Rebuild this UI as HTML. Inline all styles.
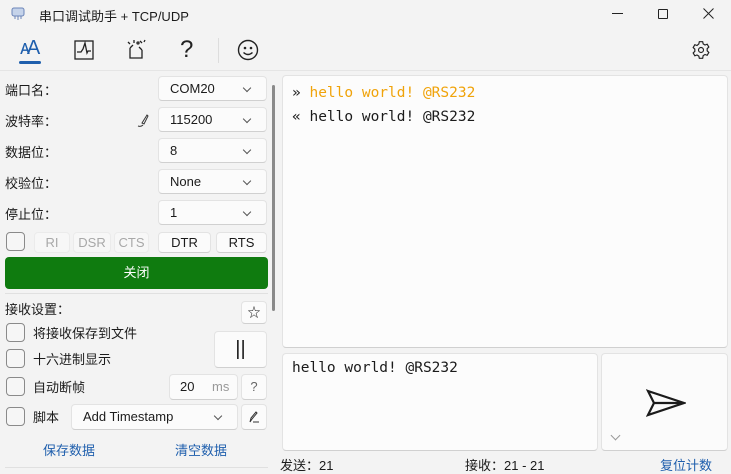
<!DOCTYPE html>
<html><head><meta charset="utf-8"><style>
*{box-sizing:border-box;margin:0;padding:0}
body{width:731px;height:472px;overflow:hidden;background:#f3f3f3;font-family:"Liberation Sans","Noto Sans CJK SC",sans-serif;font-size:13px;color:#1b1b1b;position:relative}
.a{position:absolute}
.box{position:absolute;background:#fbfbfb;border:1px solid #e3e3e3;border-bottom-color:#d0d0d0;border-radius:4px}
.sel{position:absolute;background:#fbfbfb;border:1px solid #e3e3e3;border-bottom-color:#d0d0d0;border-radius:4px;padding-left:11px;line-height:23px;font-size:13px}
.sel:after{content:"";position:absolute;right:16px;top:8px;width:5px;height:5px;border-right:1px solid #555;border-bottom:1px solid #555;transform:rotate(45deg)}
.cb{position:absolute;width:19px;height:19px;border:1px solid #8a8a8a;border-radius:4px;background:#f6f6f6}
.lbl{position:absolute;font-size:13px}
.btn{position:absolute;background:#fbfbfb;border:1px solid #e3e3e3;border-bottom-color:#d0d0d0;border-radius:4px;text-align:center;font-size:13px}
.dis{color:#a8a8a8;background:#f7f7f7;border-color:#ebebeb}
.mono{font-family:"DejaVu Sans Mono","Liberation Mono",monospace;font-size:14.5px}
</style></head><body>
<svg class="a" style="left:10px;top:6px" width="16" height="16" viewBox="0 0 16 16"><rect x="2" y="2" width="12" height="8" rx="2" fill="#c5d3ea" stroke="#6b84b8"/><path d="M5 10v3M8 10v4M11 10v3" stroke="#6b84b8"/></svg>
<div class="lbl" style="left:39px;top:6px;font-size:13px">串口调试助手 + TCP/UDP</div>
<div class="a" style="left:612px;top:13px;width:11px;border-top:1px solid #222"></div>
<div class="a" style="left:658px;top:9px;width:10px;height:10px;border:1px solid #222;border-radius:1px"></div>
<svg class="a" style="left:703px;top:8px" width="11" height="11"><path d="M0.5 0.5L10.5 10.5M10.5 0.5L0.5 10.5" stroke="#222"/></svg>
<div class="a" style="left:20px;top:37px;color:#1f5fad;font-size:20px;letter-spacing:-3px">ᴀA</div>
<div class="a" style="left:19px;top:61px;width:22px;height:3px;background:#1f5fad;border-radius:2px"></div>
<svg class="a" style="left:74px;top:40px" width="20" height="20" viewBox="0 0 20 20" fill="none" stroke="#222" stroke-width="1.3"><rect x="1" y="1" width="18" height="18"/><path d="M3 12h4l2-3 2-6 2 10 1-2h3"/></svg>
<svg class="a" style="left:126px;top:38px" width="22" height="22" viewBox="0 0 22 22" fill="none" stroke="#222" stroke-width="1.3"><path d="M4 10v10h12v-8M4 10l3-3M16 12l-3-3"/><path d="M2 4l2 2M8 2v3M14 3l2 2M18 4l1-2" /><circle cx="12" cy="5" r="1"/></svg>
<div class="a" style="left:180px;top:36px;font-size:24px;font-weight:300;color:#222">?</div>
<div class="a" style="left:218px;top:38px;height:25px;border-left:1px solid #ddd"></div>
<svg class="a" style="left:237px;top:39px" width="22" height="22" viewBox="0 0 22 22" fill="none" stroke="#222" stroke-width="1.4"><circle cx="11" cy="11" r="9.5"/><circle cx="8" cy="9" r=".6" fill="#222"/><circle cx="14" cy="9" r=".6" fill="#222"/><path d="M6.5 13.5q4.5 4 9 0"/></svg>
<svg class="a" style="left:691px;top:40px" width="20" height="20" viewBox="0 0 24 24" fill="none" stroke="#222" stroke-width="1.4"><path d="M10 2h4l.6 2.7 2.2 1.3 2.6-.9 2 3.4-2 1.9v2.6l2 1.9-2 3.4-2.6-.9-2.2 1.3L14 22h-4l-.6-2.7-2.2-1.3-2.6.9-2-3.4 2-1.9v-2.6l-2-1.9 2-3.4 2.6.9L9.4 4.7z"/><circle cx="12" cy="12" r="3"/></svg>
<div class="a" style="left:0;top:70px;width:731px;border-top:1px solid #e5e5e5"></div>
<div class="lbl" style="left:5px;top:80px">端口名：</div>
<div class="sel" style="left:158px;top:76px;width:109px;height:25px">COM20</div>
<div class="lbl" style="left:5px;top:111px">波特率：</div>
<svg class="a" style="left:136px;top:112px" width="14" height="16" viewBox="0 0 14 16" fill="none" stroke="#333"><path d="M2 14q3 1 5-1M6 11l5-8 1 1-4 8z"/></svg>
<div class="sel" style="left:158px;top:107px;width:109px;height:25px">115200</div>
<div class="lbl" style="left:5px;top:142px">数据位：</div>
<div class="sel" style="left:158px;top:138px;width:109px;height:25px">8</div>
<div class="lbl" style="left:5px;top:173px">校验位：</div>
<div class="sel" style="left:158px;top:169px;width:109px;height:25px">None</div>
<div class="lbl" style="left:5px;top:204px">停止位：</div>
<div class="sel" style="left:158px;top:200px;width:109px;height:25px">1</div>
<div class="a" style="left:272px;top:85px;width:3px;height:226px;background:#8a8a8a;border-radius:2px"></div>
<div class="cb" style="left:6px;top:232px"></div>
<div class="btn dis" style="left:34px;top:232px;width:36px;height:21px;line-height:19px">RI</div>
<div class="btn dis" style="left:73px;top:232px;width:38px;height:21px;line-height:19px">DSR</div>
<div class="btn dis" style="left:114px;top:232px;width:35px;height:21px;line-height:19px">CTS</div>
<div class="btn" style="left:158px;top:232px;width:53px;height:21px;line-height:19px">DTR</div>
<div class="btn" style="left:216px;top:232px;width:51px;height:21px;line-height:19px">RTS</div>
<div class="a" style="left:5px;top:257px;width:263px;height:32px;background:#0f7b0f;border-radius:4px;color:#fff;text-align:center;line-height:32px;font-size:13px">关闭</div>
<div class="a" style="left:5px;top:293px;width:263px;border-top:1px solid #e0e0e0"></div>
<div class="lbl" style="left:5px;top:299px">接收设置：</div>
<div class="btn" style="left:241px;top:301px;width:26px;height:23px;line-height:21px;font-size:13px">☆</div>
<div class="cb" style="left:6px;top:323px"></div><div class="lbl" style="left:33px;top:323px">将接收保存到文件</div>
<div class="cb" style="left:6px;top:349px"></div><div class="lbl" style="left:33px;top:349px">十六进制显示</div>
<div class="btn" style="left:214px;top:331px;width:53px;height:37px;line-height:34px;font-size:20px">||</div>
<div class="cb" style="left:6px;top:377px"></div><div class="lbl" style="left:33px;top:377px">自动断帧</div>
<div class="box" style="left:169px;top:374px;width:69px;height:26px"><span class="a" style="left:10px;top:4px">20</span><span class="a" style="left:42px;top:4px;color:#999">ms</span></div>
<div class="btn" style="left:241px;top:374px;width:26px;height:26px;line-height:24px;color:#666">?</div>
<div class="cb" style="left:6px;top:407px"></div><div class="lbl" style="left:33px;top:407px">脚本</div>
<div class="sel" style="left:71px;top:404px;width:167px;height:26px;line-height:24px">Add Timestamp</div>
<div class="btn" style="left:241px;top:404px;width:26px;height:26px"><svg style="margin-top:5px" width="14" height="14" viewBox="0 0 14 14" fill="none" stroke="#333"><path d="M3 12l1-4 5-6 1 1-5 6zM6 12h6"/></svg></div>
<div class="lbl" style="left:43px;top:440px;color:#1f5fad">保存数据</div>
<div class="lbl" style="left:175px;top:440px;color:#1f5fad">清空数据</div>
<div class="a" style="left:5px;top:467px;width:263px;border-top:1px solid #e0e0e0"></div>
<div class="box" style="left:282px;top:75px;width:446px;height:273px;background:#fcfcfc">
<div class="a mono" style="left:9px;top:9px"><span style="color:#222">» </span><span style="color:#f0a30a">hello world! @RS232</span></div>
<div class="a mono" style="left:9px;top:33px">« hello world! @RS232</div>
</div>
<div class="box" style="left:282px;top:353px;width:316px;height:98px;background:#fcfcfc"><div class="a mono" style="left:9px;top:6px">hello world! @RS232</div></div>
<div class="box" style="left:601px;top:353px;width:127px;height:98px">
<svg class="a" style="left:44px;top:35px" width="40" height="28" viewBox="0 0 40 28" fill="none" stroke="#1b1b1b" stroke-width="2.2" stroke-linejoin="miter"><path d="M2 2L38 14 2 26 8 14z M8 14h30"/></svg>
<div class="a" style="left:10px;top:78px;width:7px;height:7px;border-right:1px solid #999;border-bottom:1px solid #999;transform:rotate(45deg)"></div>
</div>
<div class="lbl" style="left:280px;top:455px">发送：21</div>
<div class="lbl" style="left:465px;top:455px">接收：21 - 21</div>
<div class="lbl" style="left:660px;top:455px;color:#1f5fad">复位计数</div>
</body></html>
